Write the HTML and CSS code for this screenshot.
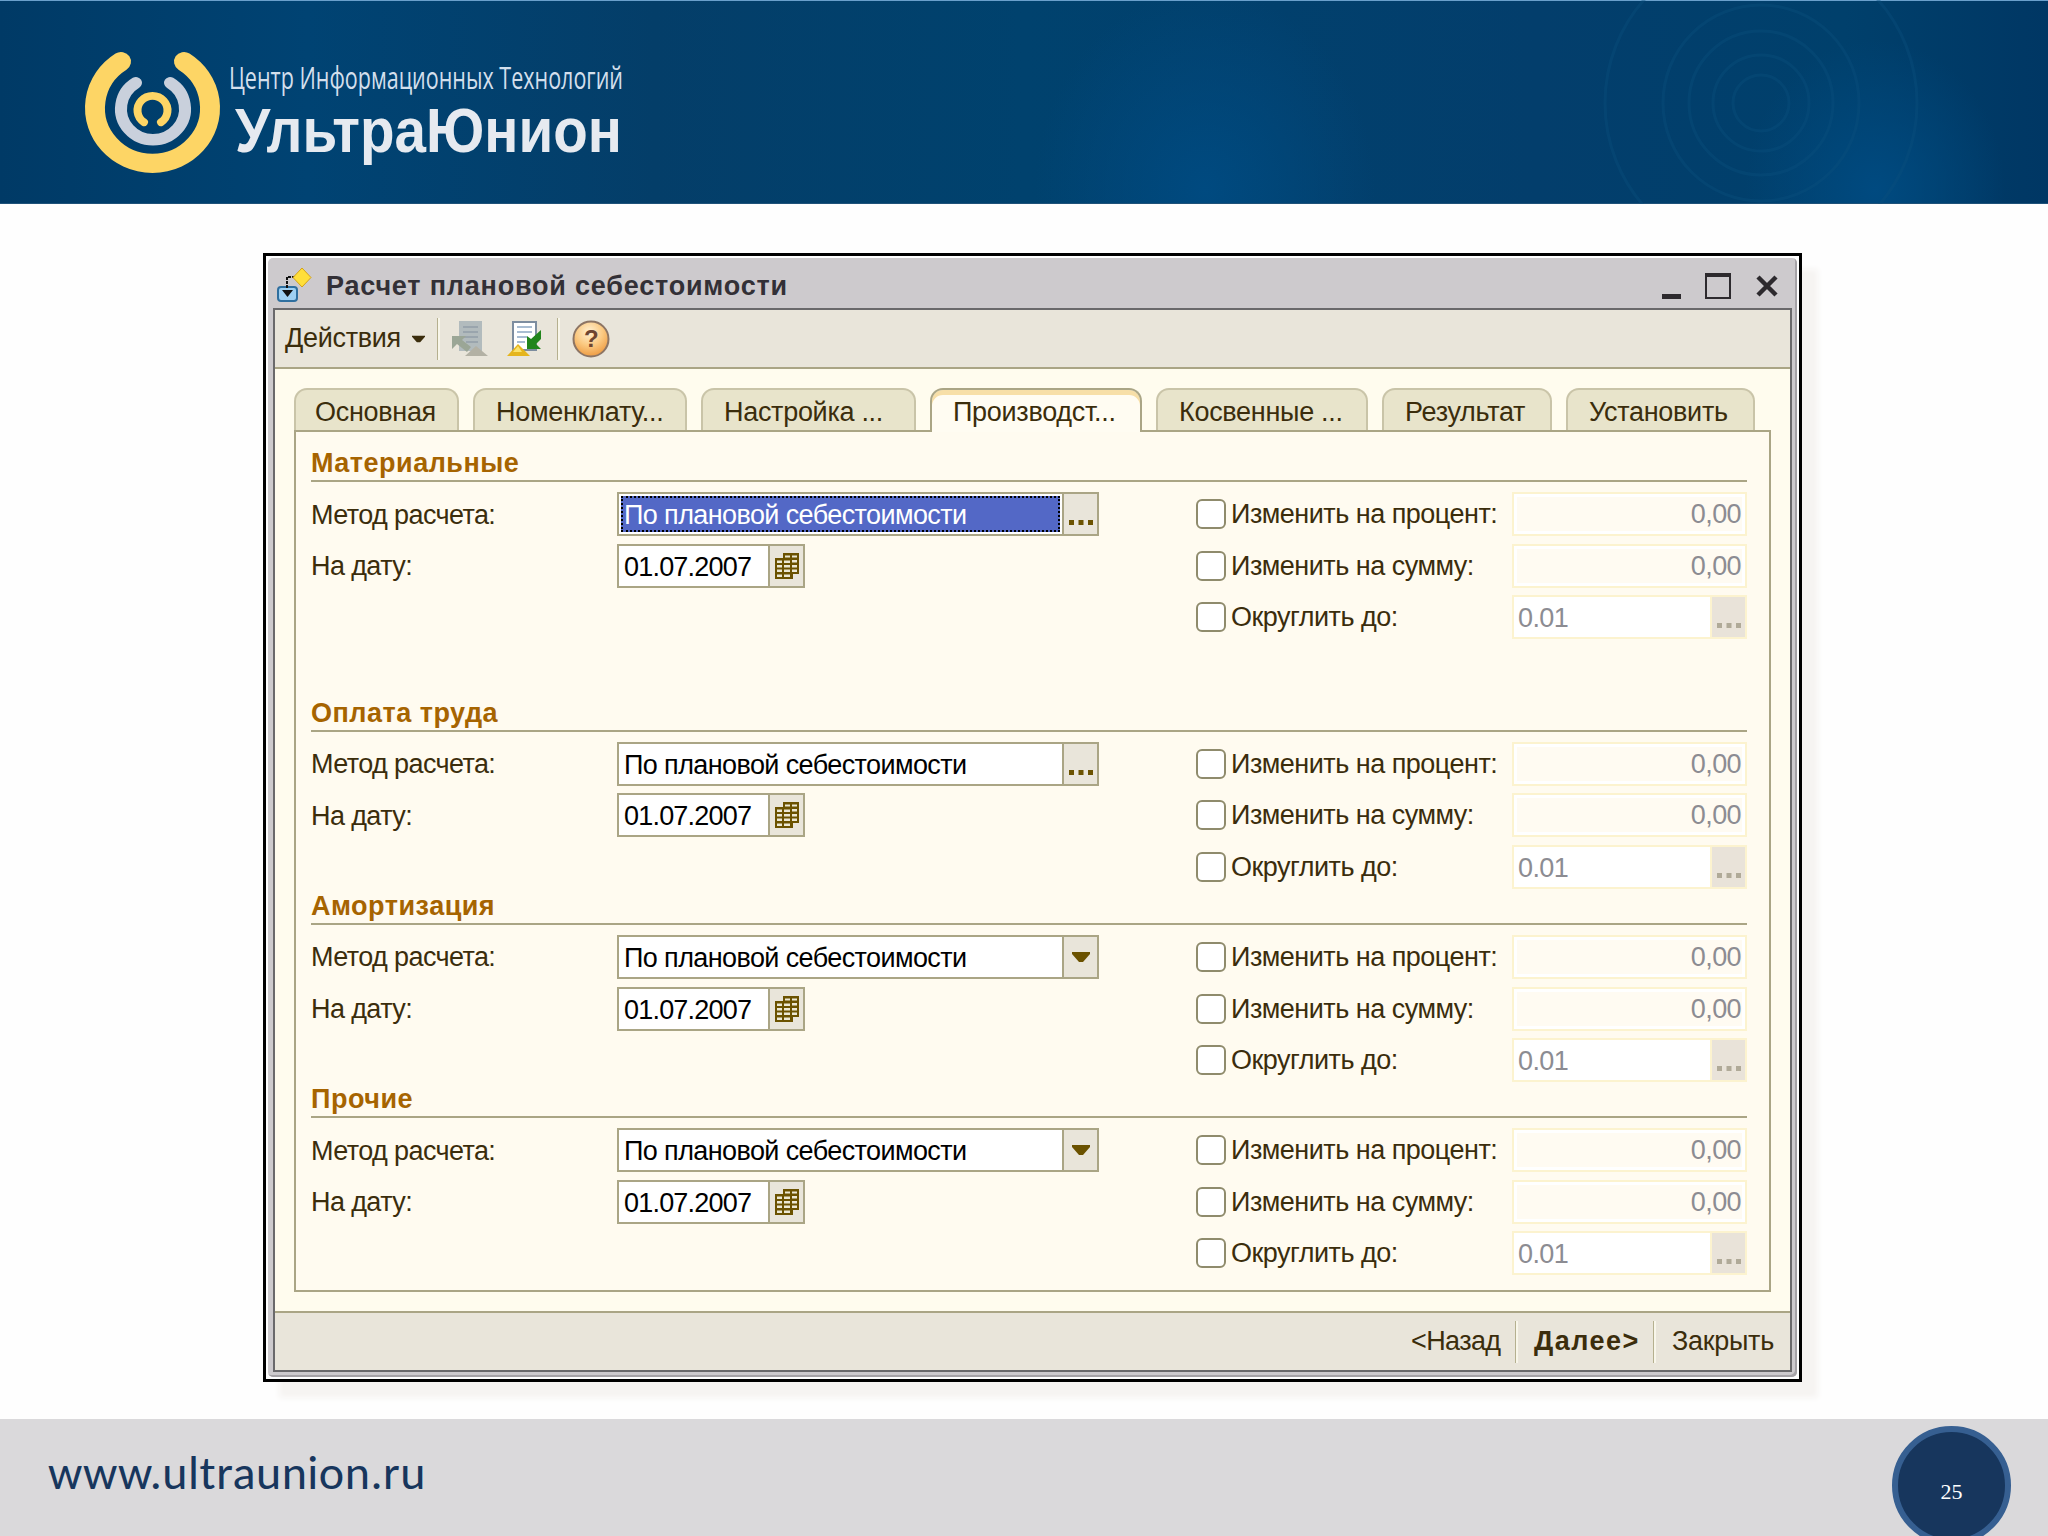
FILE: index.html
```html
<!DOCTYPE html>
<html lang="ru">
<head>
    <meta charset="UTF-8">
    <meta name="viewport" content="width=device-width, initial-scale=1.0">
    <title>Расчет плановой себестоимости</title>
    <link rel="stylesheet" href="styles.css">
</head>
<body>

    <svg class="sprite">
        <symbol id="calendar" viewBox="0 0 24 26">
            <path d="M8 0H24V21H18V26H0V5H8Z" fill="#6b5200"/>
            <path d="M10 2.500h5v2h-5zM17 2.500h5v2h-5zM2 7.500h5v2.500h-5zM9 7.500h6v2.500h-6zM17 7h5v2.500h-5zM2 12h5v2.500h-5zM9 12h6v2.500h-6zM17 12h5v2.500h-5zM2 16.500h5v2.500h-5zM9 16.500h6v2.500h-6zM17 16.500h5v2.500h-5zM2 21.500h5v2.500h-5zM9 21.500h6v2.500h-6z" fill="#ece8d4"/>
        </symbol>
        <symbol id="dots" viewBox="0 0 26 6">
            <path d="M1 0h5v5h-5zM10.500 0h5v5h-5zM20 0h5v5h-5z" fill="currentColor"/>
        </symbol>
        <symbol id="arrow" viewBox="0 0 18 10">
            <path d="M0 0H18V2L11 10H7L0 2Z" fill="currentColor"/>
        </symbol>
    </svg>

    <header class="header">
        <svg class="logo" width="960" height="204" viewBox="80 0 960 204">
            <g fill="none" stroke-linecap="round" transform="translate(0 3.800) scale(1 0.963)">
                <path d="M121 60A57.500 57.500 0 1 0 184 60" stroke="#fdd565" stroke-width="20"/>
                <path d="M136 82A32 32 0 1 0 170 82" stroke="#c9d0dc" stroke-width="12"/>
                <path d="M144 123A15 15 0 1 1 161 123" stroke="#fdd565" stroke-width="8"/>
            </g>
            <text class="logo-small" x="229" y="89" textLength="394" lengthAdjust="spacingAndGlyphs">Центр Информационных Технологий</text>
            <text class="logo-big" x="235" y="152" textLength="387" lengthAdjust="spacingAndGlyphs">УльтраЮнион</text>
        </svg>
        <svg class="rings" width="340" height="204" viewBox="0 0 340 204" fill="none" stroke="#0a4f7d" stroke-width="3">
            <circle cx="165" cy="103" r="28"/>
            <circle cx="165" cy="103" r="48"/>
            <circle cx="165" cy="103" r="72"/>
            <circle cx="165" cy="103" r="98"/>
            <circle cx="165" cy="103" r="156"/>
        </svg>
    </header>

    <main class="main">
        <div class="dialog">
            <div class="frame">
                <div class="titlebar">
                    <svg class="title-icon" width="36" height="36" viewBox="0 0 36 36">
                        <rect x="2" y="19" width="19" height="14" rx="3" fill="#9fd0f2" stroke="#2f6f9f" stroke-width="2"/>
                        <path d="M11 20V9H22" fill="none" stroke="#111" stroke-width="2" stroke-dasharray="3 1"/>
                        <path d="M6 22H17L11.500 29Z" fill="#111"/>
                        <path d="M26 0L35 9.500L26 19L17 9.500Z" fill="#ffdf3a" stroke="#d3a21a"/>
                    </svg>
                    <h1>Расчет плановой себестоимости</h1>
                    <svg class="window-btns" width="118" height="28" viewBox="0 0 118 28">
                        <rect x="1" y="22" width="19" height="5" fill="#2d2a2e"/>
                        <path d="M44 1H70V27H44ZM46 5V25H68V5Z" fill="#2d2a2e" fill-rule="evenodd"/>
                        <path d="M97 5L115 23M115 5L97 23" stroke="#2d2a2e" stroke-width="4.500"/>
                    </svg>
                </div>

                <div class="inner">
                    <div class="toolbar">
                        <span class="menu">Действия</span>
                        <svg class="menu-arrow" width="13" height="8" viewBox="0 0 18 10"><use href="#arrow"/></svg>
                        <i class="sep"></i>
                        <svg class="tool-prev" width="36" height="36" viewBox="0 0 36 36">
                            <rect x="7" y="0" width="23" height="30" fill="#b2bbbd"/>
                            <path d="M11 6H26M11 11H26M11 16H26M14 21H26" stroke="#9aa5ad" stroke-width="2"/>
                            <path d="M0 15H14L10 19L19 26L15 31L5 23L0 28Z" fill="#9ba696"/>
                            <path d="M13 35L24 25L36 35Z" fill="#b3b1a4"/>
                        </svg>
                        <svg class="tool-next" width="36" height="36" viewBox="0 0 36 36">
                            <path d="M6 1H29V29H6Z" fill="#fff" stroke="#7d8d9f" stroke-width="2"/>
                            <path d="M10 6H25M10 11H25M10 16H20M10 21H18" stroke="#a9bdd2" stroke-width="2"/>
                            <path d="M20 15L24 18L34 9V18L29 23L34 28H20Z" fill="#21851c"/>
                            <path d="M0 35L11 23L23 35Z" fill="#e5b51d"/>
                            <path d="M6 31L11 25L15 31Z" fill="#fbe26b"/>
                        </svg>
                        <i class="sep"></i>
                        <svg class="tool-help" width="38" height="38" viewBox="0 0 38 38">
                            <defs>
                                <radialGradient id="orange" cx="0.45" cy="0.3" r="0.7">
                                    <stop offset="0" stop-color="#fff0d2"/>
                                    <stop offset="0.55" stop-color="#fbc981"/>
                                    <stop offset="1" stop-color="#ee9c43"/>
                                </radialGradient>
                            </defs>
                            <circle cx="19" cy="19" r="17.500" fill="url(#orange)" stroke="#8d7564" stroke-width="2"/>
                            <text class="help-mark" x="19" y="27" text-anchor="middle">?</text>
                        </svg>
                    </div>

                    <div class="content">
                        <div class="tabs">
                            <div class="tab tab-1">Основная</div>
                            <div class="tab tab-2">Номенклату...</div>
                            <div class="tab tab-3">Настройка ...</div>
                            <div class="tab tab-4 active">Производст...</div>
                            <div class="tab tab-5">Косвенные ...</div>
                            <div class="tab tab-6">Результат</div>
                            <div class="tab tab-7">Установить</div>
                        </div>

                        <div class="panel">
                            <section class="group first">
                                <h2>Материальные</h2>
                                <div class="fields">
                                    <label>Метод расчета:</label>
                                    <div class="input combo"><span class="value selected">По плановой себестоимости</span><span class="btn"><svg class="dots"><use href="#dots"/></svg></span></div>
                                    <label class="check"><i class="box"></i>Изменить на процент:</label>
                                    <div class="input disabled num"><span class="value">0,00</span></div>
                                    <label>На дату:</label>
                                    <div class="input date"><span class="value">01.07.2007</span><span class="btn"><svg class="calendar"><use href="#calendar"/></svg></span></div>
                                    <label class="check"><i class="box"></i>Изменить на сумму:</label>
                                    <div class="input disabled num"><span class="value">0,00</span></div>
                                    <label class="check round"><i class="box"></i>Округлить до:</label>
                                    <div class="input disabled"><span class="value">0.01</span><span class="btn"><svg class="dots"><use href="#dots"/></svg></span></div>
                                </div>
                            </section>

                            <section class="group">
                                <h2>Оплата труда</h2>
                                <div class="fields">
                                    <label>Метод расчета:</label>
                                    <div class="input combo"><span class="value">По плановой себестоимости</span><span class="btn"><svg class="dots"><use href="#dots"/></svg></span></div>
                                    <label class="check"><i class="box"></i>Изменить на процент:</label>
                                    <div class="input disabled num"><span class="value">0,00</span></div>
                                    <label>На дату:</label>
                                    <div class="input date"><span class="value">01.07.2007</span><span class="btn"><svg class="calendar"><use href="#calendar"/></svg></span></div>
                                    <label class="check"><i class="box"></i>Изменить на сумму:</label>
                                    <div class="input disabled num"><span class="value">0,00</span></div>
                                    <label class="check round"><i class="box"></i>Округлить до:</label>
                                    <div class="input disabled"><span class="value">0.01</span><span class="btn"><svg class="dots"><use href="#dots"/></svg></span></div>
                                </div>
                            </section>

                            <section class="group">
                                <h2>Амортизация</h2>
                                <div class="fields">
                                    <label>Метод расчета:</label>
                                    <div class="input combo"><span class="value">По плановой себестоимости</span><span class="btn"><svg class="arrow"><use href="#arrow"/></svg></span></div>
                                    <label class="check"><i class="box"></i>Изменить на процент:</label>
                                    <div class="input disabled num"><span class="value">0,00</span></div>
                                    <label>На дату:</label>
                                    <div class="input date"><span class="value">01.07.2007</span><span class="btn"><svg class="calendar"><use href="#calendar"/></svg></span></div>
                                    <label class="check"><i class="box"></i>Изменить на сумму:</label>
                                    <div class="input disabled num"><span class="value">0,00</span></div>
                                    <label class="check round"><i class="box"></i>Округлить до:</label>
                                    <div class="input disabled"><span class="value">0.01</span><span class="btn"><svg class="dots"><use href="#dots"/></svg></span></div>
                                </div>
                            </section>

                            <section class="group">
                                <h2>Прочие</h2>
                                <div class="fields">
                                    <label>Метод расчета:</label>
                                    <div class="input combo"><span class="value">По плановой себестоимости</span><span class="btn"><svg class="arrow"><use href="#arrow"/></svg></span></div>
                                    <label class="check"><i class="box"></i>Изменить на процент:</label>
                                    <div class="input disabled num"><span class="value">0,00</span></div>
                                    <label>На дату:</label>
                                    <div class="input date"><span class="value">01.07.2007</span><span class="btn"><svg class="calendar"><use href="#calendar"/></svg></span></div>
                                    <label class="check"><i class="box"></i>Изменить на сумму:</label>
                                    <div class="input disabled num"><span class="value">0,00</span></div>
                                    <label class="check round"><i class="box"></i>Округлить до:</label>
                                    <div class="input disabled"><span class="value">0.01</span><span class="btn"><svg class="dots"><use href="#dots"/></svg></span></div>
                                </div>
                            </section>
                        </div>
                    </div>

                    <div class="actions">
                        <span class="back">&lt;Назад</span>
                        <i class="sep"></i>
                        <span class="next">Далее&gt;</span>
                        <i class="sep"></i>
                        <span class="close">Закрыть</span>
                    </div>
                </div>
            </div>
        </div>
    </main>

    <footer class="footer">
        <span class="site">www.ultraunion.ru</span>
        <span class="page">25</span>
    </footer>

</body>
</html>
```
FILE: styles.css
```css
* {
    box-sizing: border-box;
}

body {
    margin: 0;
    width: 2048px;
    height: 1536px;
    overflow: hidden;
    display: flex;
    flex-direction: column;
    background: #fefefe;
    font-family: "Liberation Sans", Arial, sans-serif;
    font-size: 27px;
    letter-spacing: -0.6px;
    color: #3b2d0c;
}

svg {
    display: block;
    flex: none;
}

.sprite {
    display: none;
}

/* Header */

.header {
    height: 204px;
    flex: none;
    display: flex;
    justify-content: space-between;
    padding: 0 112px 0 80px;
    background:
        radial-gradient(ellipse 170px 200px at 1205px 190px, #004a80, transparent),
        radial-gradient(ellipse 130px 150px at 1875px 190px, #004a80, transparent),
        linear-gradient(90deg, #003a66 0, #004373 15%, #043e69 32%, #00426e 50%, #033e6c 75%, #00406c 90%, #003764 100%);
    box-shadow: inset 0 1px #6aa0cc, inset 0 -1px #1f5279;
}

.logo-small {
    font-family: "Open Sans", sans-serif;
    font-size: 31px;
    letter-spacing: 0;
    fill: #d3dfec;
}

.logo-big {
    font-size: 63px;
    font-weight: bold;
    letter-spacing: 0;
    fill: #e6eaf0;
}

.rings {
    opacity: 0.4;
}

/* Dialog */

.main {
    height: 1215px;
    flex: none;
    padding: 49px 0 0 263px;
}

.dialog {
    width: 1539px;
    height: 1129px;
    padding: 2px;
    border: 3px solid #000;
    background: #fff;
    box-shadow: 16px 16px 6px #f6f4f2;
}

.frame {
    height: 100%;
    padding: 0 5px 5px;
    display: flex;
    flex-direction: column;
    background: #cdcacd;
    border-radius: 5px;
    box-shadow: inset -2px -2px #a5a2a6;
}

.titlebar {
    height: 50px;
    flex: none;
    display: flex;
    align-items: center;
    padding: 6px 13px 0 3px;
}

.titlebar h1 {
    flex: 1;
    margin: 0 0 0 14px;
    font-size: 27px;
    letter-spacing: 0.8px;
    color: #333036;
}

.inner {
    flex: 1;
    display: flex;
    flex-direction: column;
    border: 2px solid #6a696b;
    background: #fffcee;
}

.toolbar {
    height: 59px;
    flex: none;
    display: flex;
    align-items: center;
    padding: 0 10px;
    background: #e9e5da;
    border-bottom: 2px solid #aaa585;
}

.menu {
    width: 127px;
    letter-spacing: -0.3px;
}

.menu-arrow {
    margin-right: 12px;
}

.sep {
    width: 3px;
    height: 42px;
    flex: none;
    border-left: 1px solid #b5b08f;
    border-right: 2px solid #f8f6ea;
}

.tool-prev {
    margin-left: 12px;
}

.tool-next {
    margin: 0 14px 0 19px;
}

.tool-help {
    margin-left: 12px;
}

.help-mark {
    font-size: 24px;
    font-weight: bold;
    fill: #6f4530;
}

.content {
    flex: 1;
    padding: 19px 0 0 19px;
}

/* Tabs */

.tabs {
    display: flex;
    gap: 14px;
}

.tab {
    height: 42px;
    padding-left: 21px;
    line-height: 45px;
    letter-spacing: -0.3px;
    white-space: nowrap;
    background: #e8e4cb;
    border: 2px solid #c9c4a8;
    border-bottom: none;
    border-radius: 13px 13px 0 0;
}

.tab.active {
    height: 44px;
    margin-bottom: -2px;
    background: #fffcf2;
    border-color: #aaa585;
    box-shadow: inset 0 5px #f7dfa8;
    position: relative;
}

.tab-1 { width: 165px; padding-left: 19px; }
.tab-2 { width: 214px; }
.tab-3 { width: 215px; }
.tab-4 { width: 212px; }
.tab-5 { width: 212px; }
.tab-6 { width: 170px; }
.tab-7 { width: 189px; }

.panel {
    width: 1477px;
    height: 862px;
    padding: 14px 22px 0 15px;
    border: 2px solid #aaa585;
    background: #fffbf0;
}

/* Groups of fields */

.group.first {
    margin-bottom: 56.3px;
}

.group h2 {
    height: 36px;
    margin: 0 0 10px;
    border-bottom: 2px solid #aaa585;
    font-size: 27px;
    line-height: 35px;
    letter-spacing: 0.5px;
    color: #a66400;
}

.fields {
    display: grid;
    grid-template-columns: 306px 579px 316px 235px;
    grid-auto-rows: 44px;
    row-gap: 7.650px;
    align-items: center;
    white-space: nowrap;
}

.fields label {
    line-height: 44px;
    padding-top: 1px;
}

.fields .check {
    display: flex;
    align-items: center;
    padding-top: 0;
    line-height: 46px;
    letter-spacing: -0.5px;
}

.check.round {
    grid-column: 3;
}

.box {
    width: 30px;
    height: 30px;
    margin-right: 5px;
    border: 2px solid #8f8b6c;
    border-radius: 6px;
    background: #fff;
}

.input {
    height: 44px;
    display: flex;
    border: 2px solid #aaa585;
    background: #fff;
    color: #000;
}

.combo {
    width: 482px;
}

.date {
    width: 188px;
}

.date .value {
    letter-spacing: -0.8px;
}

.value {
    flex: 1;
    padding-left: 5px;
    line-height: 42px;
}

.selected {
    margin: 2px;
    padding-left: 1px;
    border: 2px dotted #000;
    background: #5368c6;
    color: #fff;
    line-height: 34px;
}

.btn {
    width: 35px;
    display: flex;
    align-items: center;
    justify-content: center;
    border-left: 2px solid #aaa585;
    background: #e9e5da;
    color: #6b5200;
}

.dots {
    width: 26px;
    height: 6px;
    margin-top: 18px;
}

.calendar {
    width: 24px;
    height: 26px;
}

.arrow {
    width: 18px;
    height: 10px;
}

.disabled {
    border-color: #fcf3cf;
    color: #8c8c92;
}

.disabled .value {
    padding-left: 4px;
}

.disabled .btn {
    border-color: #fcf3cf;
    background: #e9e3d9;
    color: #b0aa98;
}

.num .value {
    margin: 3px;
    padding-right: 1px;
    background: #fffbf2;
    line-height: 35px;
    text-align: right;
}

/* Bottom buttons */

.actions {
    height: 59px;
    flex: none;
    display: flex;
    align-items: center;
    justify-content: flex-end;
    border-top: 2px solid #aaa585;
    background: #e9e5da;
}

.back {
    width: 104px;
}

.next {
    width: 135px;
    padding-left: 16px;
    font-weight: bold;
    letter-spacing: 1.500px;
}

.close {
    width: 134px;
    padding-left: 16px;
    letter-spacing: -0.3px;
}

/* Footer */

.footer {
    height: 117px;
    flex: none;
    display: flex;
    align-items: flex-start;
    justify-content: space-between;
    padding: 7px 37px 0 48px;
    overflow: hidden;
    background: #dad9db;
}

.site {
    font-family: Carlito, Lato, sans-serif;
    font-size: 48px;
    line-height: 94px;
    letter-spacing: 0.5px;
    color: #17365d;
}

.page {
    width: 119px;
    height: 119px;
    flex: none;
    padding-top: 5px;
    border: 6px solid #365f91;
    border-radius: 50%;
    background: #17365d;
    color: #fff;
    font-family: "Liberation Serif", serif;
    font-size: 22px;
    line-height: 109px;
    letter-spacing: 0;
    text-align: center;
}
```
